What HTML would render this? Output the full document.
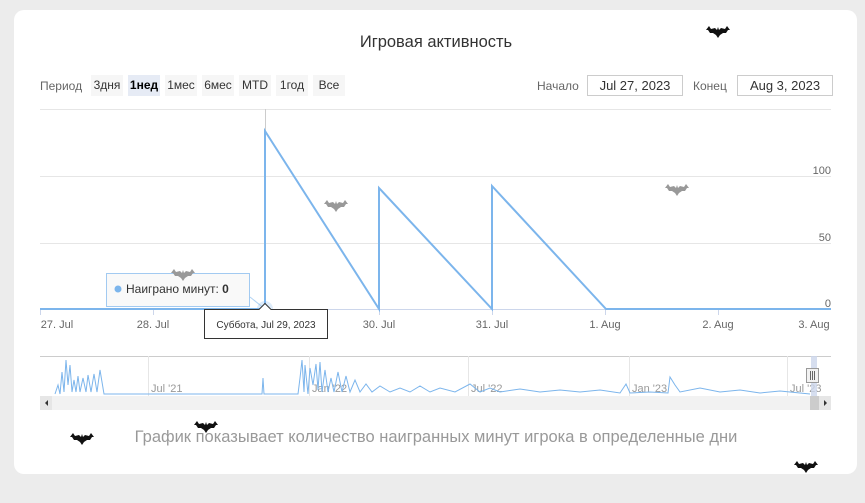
<!DOCTYPE html>
<html><head><meta charset="utf-8"><style>
body{margin:0;width:865px;height:503px;background:#ececec;font-family:"Liberation Sans","DejaVu Sans",sans-serif;position:relative;overflow:hidden}
.card{position:absolute;left:14px;top:10px;width:843px;height:464px;background:#fff;border-radius:10px}
.t{position:absolute;font-size:12px;color:#333}
.b{position:absolute;top:75px;height:21px;line-height:21px;background:#f6f6f6;font-size:12px;color:#333;text-align:center}
.in{position:absolute;top:75px;height:19px;border:1px solid #ccc;font-size:13px;line-height:19px;text-align:center;color:#333}
</style></head><body>
<div class="card"></div>
<div class="t" style="left:0;width:872px;text-align:center;top:33px;font-size:16.5px;color:#333">Игровая активность</div>
<div class="t" style="left:40px;top:79px;color:#666">Период</div>
<div class="b" style="left:91px;width:32px">3дня</div>
<div class="b" style="left:128px;width:32px;background:#e6ebf5;font-weight:bold;color:#000">1нед</div>
<div class="b" style="left:165px;width:32px">1мес</div>
<div class="b" style="left:202px;width:32px">6мес</div>
<div class="b" style="left:239px;width:32px">MTD</div>
<div class="b" style="left:276px;width:32px">1год</div>
<div class="b" style="left:313px;width:32px">Все</div>
<div class="t" style="left:537px;top:79px;color:#666">Начало</div>
<div class="in" style="left:587px;width:94px">Jul 27, 2023</div>
<div class="t" style="left:693px;top:79px;color:#666">Конец</div>
<div class="in" style="left:737px;width:94px">Aug 3, 2023</div>
<svg width="865" height="503" style="position:absolute;left:0;top:0" font-family="Liberation Sans,sans-serif">
<defs><path id="bat" d="M0 4 3 0 5 3 9 2 11 4 12 1 13 4 15 2 19 3 21 0 24 4 22 4 20 7 17 7 14 9 12 12 10 9 7 7 4 7 2 4Z"/></defs>
<g stroke="#e6e6e6"><line x1="40" y1="109.5" x2="831" y2="109.5"/><line x1="40" y1="176.5" x2="831" y2="176.5"/><line x1="40" y1="243.5" x2="831" y2="243.5"/></g>
<line x1="40" y1="309.5" x2="831" y2="309.5" stroke="#ccd6eb"/>
<line x1="265.5" y1="109" x2="265.5" y2="309" stroke="#ccc"/>
<g font-size="11" fill="#666" text-anchor="end"><text x="831" y="174">100</text><text x="831" y="241">50</text><text x="831" y="307">0</text></g>
<g stroke="#ccd6eb"><line x1="40.5" y1="309" x2="40.5" y2="315"/><line x1="153.5" y1="309" x2="153.5" y2="315"/><line x1="266.5" y1="309" x2="266.5" y2="315"/><line x1="379.5" y1="309" x2="379.5" y2="315"/><line x1="492.5" y1="309" x2="492.5" y2="315"/><line x1="605.5" y1="309" x2="605.5" y2="315"/><line x1="718.5" y1="309" x2="718.5" y2="315"/></g>
<g font-size="11" fill="#666" text-anchor="middle"><text x="57" y="328">27. Jul</text><text x="153" y="328">28. Jul</text><text x="379" y="328">30. Jul</text><text x="492" y="328">31. Jul</text><text x="605" y="328">1. Aug</text><text x="718" y="328">2. Aug</text><text x="814" y="328">3. Aug</text></g>
<polyline fill="none" stroke="#7cb5ec" stroke-width="2" points="40,309 265,309 265,131 379,309 379,188 492,309 492,186 606,309 831,309"/>
<use href="#bat" x="324" y="200" fill="#999"/>
<use href="#bat" x="665" y="184" fill="#999"/>
<circle cx="265" cy="309" r="8" fill="#7cb5ec" opacity="0.25"/>
<line x1="250" y1="297" x2="265" y2="309" stroke="#7cb5ec" opacity="0.6"/>
<rect x="106.5" y="273.5" width="143" height="33" fill="#f9f9f9" stroke="#7cb5ec" stroke-opacity="0.7"/>
<use href="#bat" x="171" y="269" fill="#999"/>
<circle cx="118" cy="289" r="3.5" fill="#7cb5ec"/>
<text x="126" y="293" font-size="12" fill="#333">Наиграно минут: <tspan font-weight="bold">0</tspan></text>
<path d="M204.5 309.5H259l6-6 6 6h56.5v29H204.5z" fill="#fff" stroke="#333"/>
<text x="266" y="328" font-size="10" fill="#333" text-anchor="middle">Суббота, Jul 29, 2023</text>
<line x1="40" y1="356.5" x2="831" y2="356.5" stroke="#ccc"/>
<g stroke="#e6e6e6"><line x1="148.5" y1="356" x2="148.5" y2="396"/><line x1="309.5" y1="356" x2="309.5" y2="396"/><line x1="468.5" y1="356" x2="468.5" y2="396"/><line x1="629.5" y1="356" x2="629.5" y2="396"/><line x1="787.5" y1="356" x2="787.5" y2="396"/></g>
<g font-size="11" fill="#999"><text x="151" y="392">Jul '21</text><text x="312" y="392">Jan '22</text><text x="471" y="392">Jul '22</text><text x="632" y="392">Jan '23</text><text x="790" y="392">Jul '23</text></g>
<polyline fill="none" stroke="#7cb5ec" points="55,394 58,385 60,394 62,372 64,392 66,360 68,385 70,365 72,392 74,380 76,392 78,376 80,392 83,378 86,392 88,375 91,392 94,374 97,392 100,370 104,394 262,394 263,378 264,394 298,394 300,378 302,360 304,392 305,365 308,394 310,368 313,385 316,364 318,390 320,362 322,392 325,370 328,392 331,378 334,392 338,372 342,392 346,376 350,392 355,380 360,392 366,384 372,392 380,386 390,392 400,388 410,392 420,386 430,392 440,388 455,392 470,384 480,392 490,388 500,392 520,389 540,392 560,390 580,392 600,390 620,393 626,384 630,393 650,392 668,393 670,377 675,385 680,392 700,388 720,392 740,390 760,393 780,391 800,393 810,394"/>
<rect x="811" y="356" width="6" height="40" fill="#ccd6eb" opacity="0.8"/>
<rect x="806.5" y="368.5" width="12" height="14" fill="#f2f2f2" stroke="#999"/>
<g stroke="#666"><line x1="810.5" y1="371" x2="810.5" y2="380"/><line x1="812.5" y1="371" x2="812.5" y2="380"/><line x1="814.5" y1="371" x2="814.5" y2="380"/></g>
<rect x="40" y="396" width="791" height="14" fill="#f2f2f2"/>
<rect x="40" y="396" width="12" height="14" fill="#e6e6e6"/>
<path d="M48 400v6l-3-3z" fill="#333"/>
<rect x="810" y="396" width="9" height="14" fill="#ccc"/>
<rect x="819" y="396" width="12" height="14" fill="#e6e6e6"/>
<path d="M824 400v6l3-3z" fill="#333"/>
<use href="#bat" x="706" y="26" fill="#111"/>
<use href="#bat" x="70" y="433" fill="#111"/>
<use href="#bat" x="194" y="421" fill="#111"/>
<use href="#bat" x="794" y="461" fill="#111"/>
</svg>
<div class="t" style="left:0;width:872px;text-align:center;top:428px;font-size:16.5px;color:#999">График показывает количество наигранных минут игрока в определенные дни</div>
</body></html>
